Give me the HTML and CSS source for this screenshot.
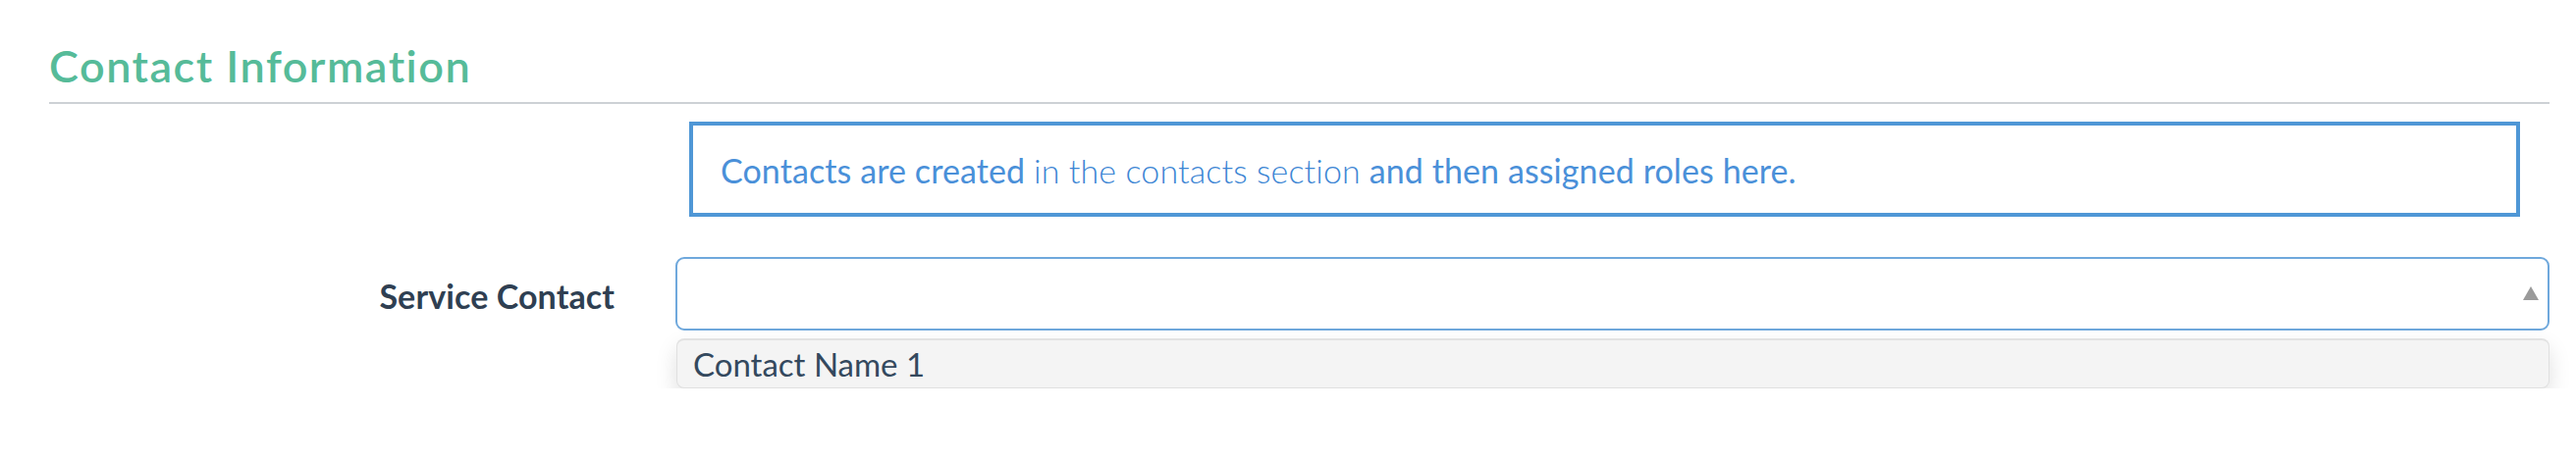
FILE: index.html
```html
<!DOCTYPE html>
<html lang="en">
<head>
<meta charset="utf-8">
<title>Contact Information</title>
<link rel="stylesheet" href="styles.css">
</head>
<body>
<section class="section">
  <h1 class="section-title">Contact Information</h1>
  <div class="form-row info-row">
    <div class="form-label"></div>
    <div class="form-field">
      <div class="info-box">Contacts are created <span class="info-link">in the contacts section</span> and then assigned roles here.</div>
    </div>
  </div>
  <div class="form-row select-row">
    <div class="form-label">Service Contact</div>
    <div class="form-field">
      <div class="select-wrap">
        <div class="select-box">
          <svg class="select-arrow" width="16" height="14" viewBox="0 0 16 14" aria-hidden="true"><path d="M8 0 L16 14 L0 14 Z" fill="#9a9a9a"/></svg>
        </div>
        <div class="dropdown">
          <div class="dropdown-item">Contact Name 1</div>
        </div>
      </div>
    </div>
  </div>
</section>
</body>
</html>
```
FILE: styles.css
```css
html, body {
  margin: 0;
  padding: 0;
  background: #ffffff;
}

body {
  font-family: "Lato", "Liberation Sans", sans-serif;
  color: #2c3e50;
}

.section {
  padding: 45px 27px 0 50px;
}

.section-title {
  margin: 0;
  font-size: 45px;
  line-height: 45px;
  font-weight: 600;
  letter-spacing: 1.5px;
  color: #56bb99;
  padding-bottom: 14px;
  border-bottom: 2px solid #cdd1d5;
}

.form-row {
  display: grid;
  grid-template-columns: 638px 1fr;
  align-items: start;
}

.info-row {
  margin-top: 18px;
}

.info-box {
  margin: 0 30px 0 14px;
  border: 4px solid #4f97d6;
  padding: 25px 28px 23px;
  font-size: 34px;
  line-height: 41px;
  letter-spacing: 0.1px;
  color: #4a90d9;
  font-weight: 400;
}

.info-link {
  font-weight: 300;
  color: #3d86d4;
}

.select-row {
  margin-top: 41px;
}

.form-label {
  text-align: right;
  padding-right: 62px;
  padding-top: 19px;
  font-size: 34px;
  line-height: 41px;
  font-weight: 700;
  letter-spacing: 0.1px;
  color: #2f3f52;
}

.select-wrap {
  display: flex;
  flex-direction: column;
  gap: 8px;
}

.select-box {
  box-sizing: border-box;
  height: 75px;
  border: 2px solid #6fa8dc;
  border-radius: 9px;
  background: #ffffff;
  display: flex;
  align-items: center;
  justify-content: flex-end;
  padding-right: 9px;
}

.select-arrow {
  display: block;
  margin-top: -2px;
}

.dropdown {
  margin-left: 1px;
  background: #f4f4f4;
  border: 1px solid #e0e0e0;
  border-top: 2px solid #e2e2e2;
  border-radius: 8px;
  box-shadow: 0 10px 22px rgba(0, 0, 0, 0.13);
}

.dropdown-item {
  padding: 1px 16px 0;
  height: 48px;
  box-sizing: border-box;
  font-size: 33px;
  line-height: 47px;
  color: #34495e;
}
```
